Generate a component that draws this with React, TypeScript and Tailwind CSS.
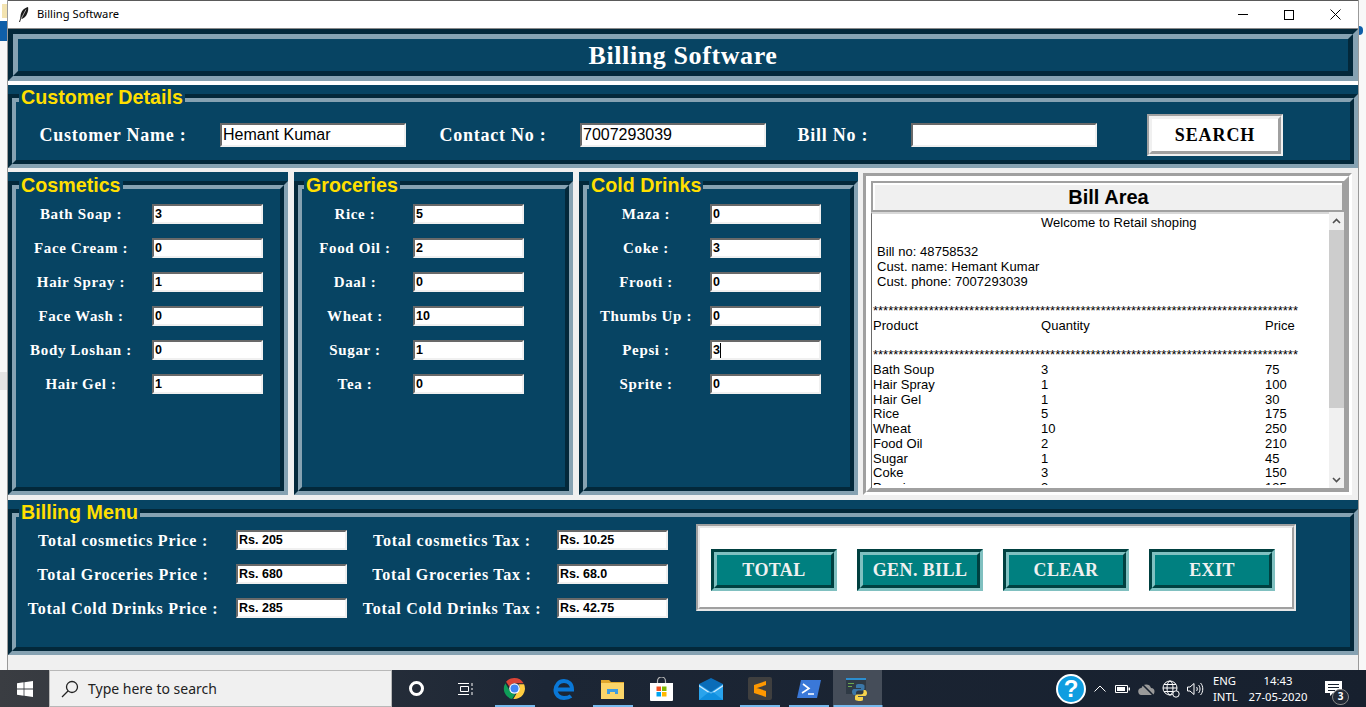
import React from "react";

const serif = "font-['Liberation_Serif',serif]";
const sans = "font-['Liberation_Sans',Arial,sans-serif]";

// tk "groove" border: two nested boxes so the corners get mitred like the original
const Groove = ({ className = "", children }: { className?: string; children?: React.ReactNode }) => (
  <div className={`border-[5px] border-t-[#03283a] border-l-[#03283a] border-r-[#86a2b2] border-b-[#86a2b2] ${className}`}>
    <div className="h-full border-[5px] border-t-[#86a2b2] border-l-[#86a2b2] border-r-[#03283a] border-b-[#03283a]">
      {children}
    </div>
  </div>
);

const LabelFrame = ({
  title,
  className = "",
  titleClass = "left-[11px] top-[1px]",
  children,
}: {
  title: string;
  className?: string;
  titleClass?: string;
  children?: React.ReactNode;
}) => (
  <div className={`relative bg-[#074463] pt-[9px] ${className}`}>
    <div className={`absolute z-10 bg-[#074463] px-[2px] text-[19.7px] leading-[23px] font-bold text-[#ffdf00] ${titleClass} ${sans}`}>
      {title}
    </div>
    <div className="h-full border-4 border-t-[#03283a] border-l-[#03283a] border-r-[#86a2b2] border-b-[#86a2b2]">
      <div className="h-full border-4 border-t-[#86a2b2] border-l-[#86a2b2] border-r-[#03283a] border-b-[#03283a] p-[2px]">
        {children}
      </div>
    </div>
  </div>
);

const Field = ({ value, caret = false }: { value: string; caret?: boolean }) => (
  <div
    className={`flex h-5 w-[111px] shrink-0 items-center border-2 border-t-[#696969] border-l-[#696969] border-r-[#f0f0f0] border-b-[#f0f0f0] bg-white pl-[1px] text-[12.5px] font-bold text-black ${sans}`}
  >
    {value}
    {caret && <span className="h-[15px] w-px bg-black" />}
  </div>
);

const ItemRow = ({
  label,
  value,
  labelWidth,
  gap,
  caret,
}: {
  label: string;
  value: string;
  labelWidth: string;
  gap: string;
  caret?: boolean;
}) => (
  <div className="flex h-5 items-center">
    <div className={`${labelWidth} ${gap} shrink-0 text-center text-[15px] font-bold tracking-[0.65px] whitespace-nowrap text-white ${serif}`}>
      {label}
    </div>
    <Field value={value} caret={caret} />
  </div>
);

const ItemFrame = ({
  title,
  rows,
  width,
  labelWidth,
  gap,
  titleClass,
}: {
  title: string;
  rows: [string, string][];
  width: string;
  labelWidth: string;
  gap: string;
  titleClass: string;
}) => (
  <LabelFrame title={title} className={`${width} shrink-0`} titleClass={titleClass}>
    <div className="flex flex-col gap-[14px] pt-[13px]">
      {rows.map(([l, v]) => (
        <ItemRow key={l} label={l} value={v} labelWidth={labelWidth} gap={gap} caret={l === "Pepsi :"} />
      ))}
    </div>
  </LabelFrame>
);

const BillLine = ({ a, b, c }: { a: string; b: string; c: string }) => (
  <div className="flex">
    <span className="w-[168px]">{a}</span>
    <span className="w-[224px]">{b}</span>
    <span>{c}</span>
  </div>
);

const items: [string, string, string][] = [
  ["Bath Soup", "3", "75"],
  ["Hair Spray", "1", "100"],
  ["Hair Gel", "1", "30"],
  ["Rice", "5", "175"],
  ["Wheat", "10", "250"],
  ["Food Oil", "2", "210"],
  ["Sugar", "1", "45"],
  ["Coke", "3", "150"],
  ["Pepsi", "3", "135"],
];

const stars = "*".repeat(84);

const BillArea = () => (
  <div className="mt-[1px] -ml-[1px] w-[489px] shrink-0 border-[3px] border-t-[#a0a0a0] border-l-[#a0a0a0] border-r-white border-b-white">
    <div className="flex h-full flex-col border-[5px] border-t-white border-l-white border-r-[#a0a0a0] border-b-[#a0a0a0] bg-[#f0f0f0]">
      <div className="h-[31px] shrink-0 border-2 border-[#a0a0a0]">
        <div className={`flex h-full items-center justify-center border-t-2 border-l-2 border-white pb-[2px] text-[20px] font-bold text-black ${sans}`}>
          Bill Area
        </div>
      </div>
      <div className="flex min-h-0 flex-1">
        <div className="h-[276px] w-[458px] shrink-0 border-t-2 border-l border-t-[#d8d8d8] border-l-[#696969] bg-white">
          <div className={`h-[271px] overflow-hidden pt-[2px] pl-[1px] text-[13px] leading-[14.72px] tracking-[0.05px] text-black ${sans}`}>
            <div className="pl-[168px] whitespace-nowrap">Welcome to Retail shoping</div>
            <div className="h-[14.72px]" />
            <div className="pl-[4px]">Bill no: 48758532</div>
            <div className="pl-[4px]">Cust. name: Hemant Kumar</div>
            <div className="pl-[4px]">Cust. phone: 7007293039</div>
            <div className="h-[14.72px]" />
            <div className="tracking-normal whitespace-nowrap">{stars}</div>
            <BillLine a="Product" b="Quantity" c="Price" />
            <div className="h-[14.72px]" />
            <div className="tracking-normal whitespace-nowrap">{stars}</div>
            {items.map(([a, b, c]) => (
              <BillLine key={a} a={a} b={b} c={c} />
            ))}
          </div>
        </div>
        <div className="flex h-[276px] flex-1 flex-col bg-[#f0f0f0]">
          <div className="flex h-[18px] items-center justify-center">
            <svg width="9" height="6" viewBox="0 0 9 6" fill="none" stroke="#505050" strokeWidth="1.6">
              <path d="M1 5l3.5-3.5L8 5" />
            </svg>
          </div>
          <div className="h-[178px] bg-[#cdcdcd]" />
          <div className="flex-1" />
          <div className="flex h-4 items-center justify-center">
            <svg width="9" height="6" viewBox="0 0 9 6" fill="none" stroke="#505050" strokeWidth="1.6">
              <path d="M1 1l3.5 3.5L8 1" />
            </svg>
          </div>
        </div>
      </div>
    </div>
  </div>
);

const TkButton = ({ label }: { label: string }) => (
  <div className="h-[42px] w-[126px] border-[3px] border-t-[#004040] border-l-[#004040] border-r-[#80c0c0] border-b-[#80c0c0]">
    <div className={`flex h-full items-center justify-center border-[3px] border-t-[#80c0c0] border-l-[#80c0c0] border-r-[#004040] border-b-[#004040] bg-[#008080] text-[18px] font-bold tracking-[0.4px] text-[#f0f0f0] ${serif}`}>
      {label}
    </div>
  </div>
);

const TotalRow = ({ label, value, w, gap }: { label: string; value: string; w: string; gap: string }) => (
  <div className="flex h-5 items-center">
    <div className={`${w} ${gap} shrink-0 pt-[2px] text-center text-[16px] font-bold tracking-[0.75px] whitespace-nowrap text-white ${serif}`}>
      {label}
    </div>
    <Field value={value} />
  </div>
);

const Underline = ({ w = "w-10" }: { w?: string }) => <div className={`absolute bottom-0 left-1/2 h-[2px] -translate-x-1/2 bg-[#76b9ed] ${w}`} />;

const TaskIcon = ({ children, on, active }: { children: React.ReactNode; on?: boolean; active?: boolean }) => (
  <div className={`relative flex h-full w-[49px] shrink-0 items-center justify-center ${active ? "bg-[#454d59]" : ""}`}>
    {children}
    {on && <Underline w={active ? "w-full" : "w-10"} />}
  </div>
);

const Taskbar = () => (
  <div className="flex h-[37px] shrink-0 items-center bg-gradient-to-r from-[#3a3d42] via-[#1c2635] via-40% to-[#17202e] text-white">
    <div className="flex h-full w-[49px] shrink-0 items-center justify-center">
      <svg width="16" height="16" viewBox="0 0 16 16" fill="#fff">
        <path d="M0 2.2l6.6-.9v6.3H0zM7.4 1.2L16 0v7.6H7.4zM0 8.4h6.6v6.3L0 13.8zM7.4 8.4H16V16l-8.6-1.2z" />
      </svg>
    </div>
    <div className="flex h-full w-[343px] shrink-0 items-center border border-[#b8b8b8] bg-[#f0f0f0] pl-[11px]">
      <svg width="18" height="18" viewBox="0 0 18 18" fill="none" stroke="#222" strokeWidth="1.3">
        <circle cx="11" cy="7" r="5.5" />
        <path d="M7 11l-6 6" />
      </svg>
      <span className="ml-[9px] font-['Noto_Sans',sans-serif] text-[14px] text-[#222]">Type here to search</span>
    </div>
    <div className="flex h-full w-[49px] shrink-0 items-center justify-center">
      <div className="h-[15px] w-[15px] rounded-full border-[3px] border-white" />
    </div>
    <div className="flex h-full w-[49px] shrink-0 items-center justify-center">
      <svg width="18" height="16" viewBox="0 0 18 16" fill="none" stroke="#fff" strokeWidth="1">
        <path d="M1 2.5h11M3.5 5.5h8v5h-8zM1 13.5h11M15 2v3M15 7v2M15 11v3" />
      </svg>
    </div>
    <TaskIcon on>
      <svg width="23" height="23" viewBox="0 0 24 24">
        <path fill="#db4437" d="M12 1a11 11 0 0 1 9.5 5.5H12a5.5 5.5 0 0 0-5.2 3.7L3.2 4.9A11 11 0 0 1 12 1z" />
        <path fill="#0f9d58" d="M2.5 6.5l5 8.6a5.5 5.5 0 0 0 5.6 2.3L9.5 23A11 11 0 0 1 2.5 6.5z" />
        <path fill="#ffcd40" d="M22 7.5a11 11 0 0 1-11.2 15.4l5-8.5a5.5 5.5 0 0 0 .3-6.9z" />
        <circle cx="12" cy="12" r="5.5" fill="#fff" />
        <circle cx="12" cy="12" r="4.2" fill="#4285f4" />
      </svg>
    </TaskIcon>
    <TaskIcon>
      <svg width="22" height="22" viewBox="0 0 22 22" fill="none" stroke="#0a78d7" strokeWidth="4">
        <path d="M4 11.5h15C19 6 15.5 3 11 3 6 3 3 7 2.5 12 2.5 17 6.5 20 11 20c3 0 5.5-.8 7-2" />
      </svg>
    </TaskIcon>
    <TaskIcon on>
      <svg width="23" height="20" viewBox="0 0 23 20">
        <path fill="#e0a82e" d="M0 1h8l2 2h13v3H0z" />
        <path fill="#fbd569" d="M0 4h23v16H0z" />
        <path fill="#3f9ce0" d="M6 15v-5h11v5h-3v-2H9v2z" />
      </svg>
    </TaskIcon>
    <TaskIcon>
      <svg width="23" height="24" viewBox="0 0 23 24">
        <path fill="none" stroke="#b8b8b8" strokeWidth="1.2" d="M7.5 7V4a4 4 0 0 1 8 0v3" />
        <path fill="#fff" d="M0 6h23v17a1 1 0 0 1-1 1H1a1 1 0 0 1-1-1z" />
        <path fill="#f25022" d="M6.5 9.5H11V14H6.5z" />
        <path fill="#7fba00" d="M12 9.5h4.5V14H12z" />
        <path fill="#00a4ef" d="M6.5 15H11v4.5H6.5z" />
        <path fill="#ffb900" d="M12 15h4.5v4.5H12z" />
      </svg>
    </TaskIcon>
    <TaskIcon>
      <svg width="24" height="22" viewBox="0 0 24 22">
        <path fill="#29a3ec" d="M0 6h24v16H0z" />
        <path fill="#0a6cb8" d="M0 6l12-6 12 6-12 8z" />
        <path fill="#cfeaff" d="M0 7l12 8 12-8v1.5L12 16.5 0 8.5z" />
        <path fill="#0f8fe0" d="M0 22l10-8 2 1.5 2-1.5 10 8z" />
      </svg>
    </TaskIcon>
    <TaskIcon on>
      <div className="flex h-[23px] w-[24px] items-center justify-center rounded-[2px] bg-[#3f3f3f]">
        <svg width="12" height="16" viewBox="0 0 12 16" fill="#ff9800">
          <path d="M12 0v4L0 8V4zM0 6l12 4v4L0 10zM0 10l12 2v4L0 12z" />
        </svg>
      </div>
    </TaskIcon>
    <TaskIcon on>
      <svg width="24" height="18" viewBox="0 0 24 18">
        <path fill="#3a78d8" d="M4 0h20l-4 18H0z" />
        <path fill="none" stroke="#fff" strokeWidth="1.6" d="M6 4l6 4.5-7 4.5M11 14h6" />
      </svg>
    </TaskIcon>
    <TaskIcon on active>
      <svg width="24" height="24" viewBox="0 0 24 24">
        <path fill="#2f3a45" d="M0 1h20v16H0z" />
        <path fill="#2c8ecf" d="M0 1h20v2H0z" />
        <path fill="#6aa84f" d="M2 6h6v1H2zM2 9h4v1H2z" />
        <path fill="#3b77a8" d="M13 7c-3 0-3 1-3 2v2h5v1H8c-1.5 0-2 1.5-2 3s1 3 2 3h2v-2c0-1.5 1-2.5 2.5-2.5h4c1 0 2-1 2-2V9c0-1-1-2-3-2z" />
        <path fill="#f7d44c" d="M14 24c3 0 3-1 3-2v-2h-5v-1h7c1.5 0 2-1.5 2-3s-1-3-2-3h-1.5v2c0 1.5-1 2.5-2.5 2.5h-4c-1 0-2 1-2 2V22c0 1 1 2 5 2z" />
      </svg>
    </TaskIcon>
    <div className="flex-1" />
    <div className="flex h-full items-center pr-[10px]">
      <div className="mr-[8px] flex h-[30px] w-[30px] items-center justify-center rounded-full border-2 border-white bg-[#0f9de0] font-['Liberation_Sans',sans-serif] text-[24px] leading-none font-bold text-white">
        ?
      </div>
      <svg className="mr-[9px]" width="12" height="7" viewBox="0 0 12 7" fill="none" stroke="#fff" strokeWidth="1">
        <path d="M.5 6.5L6 1l5.5 5.5" />
      </svg>
      <svg className="mr-[8px]" width="15" height="8" viewBox="0 0 15 8">
        <path fill="none" stroke="#fff" d="M.5.5h12v7H.5z" />
        <path fill="#fff" d="M2 2h8v4H2zM13.5 2.5H15v3h-1.5z" />
      </svg>
      <svg className="mr-[7px]" width="17" height="12" viewBox="0 0 17 12">
        <path fill="#9a9a9a" d="M4 12a3.5 3.5 0 0 1-.5-7A5 5 0 0 1 13 5a3.5 3.5 0 0 1 0 7z" />
        <path stroke="#17202e" strokeWidth="1.5" d="M3 0l12 12" />
      </svg>
      <svg className="mr-[7px]" width="18" height="18" viewBox="0 0 18 18" fill="none" stroke="#fff" strokeWidth="1">
        <circle cx="8" cy="8" r="7" />
        <ellipse cx="8" cy="8" rx="3" ry="7" />
        <path d="M1 8h14M2 4.5h12M2 11.5h12" />
        <circle cx="14" cy="14" r="3.2" fill="#17202e" />
      </svg>
      <svg className="mr-[9px]" width="17" height="14" viewBox="0 0 17 14" fill="none" stroke="#fff" strokeWidth="1">
        <path d="M.5 5v4H3L7 12.5v-11L3 5zM9.5 5c1 1 1 3 0 4M11.5 3c2 2 2 6 0 8M13.5 1c3 3 3 9 0 12" />
      </svg>
      <div className="w-[33px] font-['Noto_Sans',sans-serif] text-[11.3px] leading-[16px] text-white">
        <div>ENG</div>
        <div>INTL</div>
      </div>
      <div className="w-[64px] text-center font-['Noto_Sans',sans-serif] text-[11.3px] leading-[16px] text-white">
        <div>14:43</div>
        <div className="whitespace-nowrap">27-05-2020</div>
      </div>
      <div className="relative flex w-[46px] items-center justify-center">
        <svg width="17" height="16" viewBox="0 0 17 16" fill="#fff">
          <path d="M0 0h17v12H8l-3 3v-3H0z" />
          <path stroke="#17202e" d="M3 3.5h11M3 6.5h11M3 9.5h7" />
        </svg>
        <div className="absolute top-[8px] left-[22px] flex h-[16px] w-[17px] items-center justify-center rounded-full border border-[#888] bg-[#222a36] font-['Noto_Sans',sans-serif] text-[10px] font-bold text-white">
          3
        </div>
      </div>
    </div>
  </div>
);

const TitleBar = () => (
  <div className="flex h-[29px] shrink-0 items-center border-t border-b border-t-[#5a5a5a] border-b-[#8a8a8a] bg-white">
    <svg className="ml-[11px]" width="10" height="15" viewBox="0 0 10 15">
      <path fill="#1a1a1a" d="M9 0C5 1 2 4 1.5 9L1 12 0 15h1l1-3c4-.5 6-4 7-8 .3-1.5.3-3 0-4z" />
      <path stroke="#fff" strokeWidth=".6" d="M7 2.5L2 12" />
    </svg>
    <span className="ml-[8px] font-['Noto_Sans',sans-serif] text-[11.2px] text-black">Billing Software</span>
    <div className="flex-1" />
    <div className="flex h-full w-[46px] items-center justify-center">
      <div className="h-px w-[10px] bg-black" />
    </div>
    <div className="flex h-full w-[46px] items-center justify-center">
      <div className="h-[10px] w-[10px] border border-black" />
    </div>
    <div className="flex h-full w-[46px] items-center justify-center">
      <svg width="11" height="11" viewBox="0 0 11 11" stroke="#000" strokeWidth="1">
        <path d="M.5.5l10 10M10.5.5l-10 10" />
      </svg>
    </div>
  </div>
);

const sunken = "border-2 border-t-[#696969] border-l-[#696969] border-r-[#f0f0f0] border-b-[#f0f0f0] bg-white";
const custLabel = `shrink-0 text-center text-[18px] font-bold tracking-[0.75px] text-white ${serif}`;

export default function App() {
  return (
    <div className="flex h-[707px] w-[1366px] flex-col overflow-hidden bg-white">
      <div className="flex min-h-0 flex-1">
        {/* desktop showing behind the window */}
        <div className="flex w-[8px] shrink-0 flex-col border-r border-[#9a9a9a]">
          <div className="h-[21px] bg-white pl-[2px]">
            <div className="mt-1 h-[14px] w-full bg-[#f3e3b0]" />
          </div>
          <div className="h-[20px] bg-[#0f5fa8]" />
          <div className="h-[331px] bg-[#f8f8f8]" />
          <div className="h-[18px] bg-[#e4e4e4]" />
          <div className="flex-1 bg-[#f8f8f8]" />
        </div>

        <div className="flex w-[1350px] shrink-0 flex-col bg-[#f0f0f0]">
          <TitleBar />
          <Groove className="h-[52px] shrink-0 bg-[#074463]">
            <div className={`flex h-full items-center justify-center pt-[1px] text-[26px] font-bold tracking-[0.6px] text-white ${serif}`}>
              Billing Software
            </div>
          </Groove>
          <div className="h-[4px] shrink-0 bg-white" />
          <LabelFrame title="Customer Details" className="h-[83px] shrink-0">
            <div className="flex h-full items-center pt-[8px]">
              <div className={`w-[190px] ${custLabel}`}>Customer Name :</div>
              <div className={`ml-[12px] flex h-6 w-[186px] shrink-0 items-center pl-[1px] text-[16px] text-black ${sunken} ${sans}`}>Hemant Kumar</div>
              <div className={`w-[174px] ${custLabel}`}>Contact No :</div>
              <div className={`flex h-6 w-[186px] shrink-0 items-center pl-[1px] text-[16px] text-black ${sunken} ${sans}`}>7007293039</div>
              <div className={`w-[134px] ${custLabel}`}>Bill No :</div>
              <div className={`ml-[11px] h-6 w-[186px] shrink-0 ${sunken}`} />
              <div className="ml-[50px] h-[42px] w-[136px] shrink-0 border-[2px] border-t-[#a0a0a0] border-l-[#a0a0a0] border-r-[#f0f0f0] border-b-[#f0f0f0]">
                <div className={`flex h-full items-center justify-center border-[3px] border-t-[#f0f0f0] border-l-[#f0f0f0] border-r-[#a0a0a0] border-b-[#a0a0a0] bg-white text-[18px] font-bold tracking-[0.9px] text-black ${serif}`}>
                  SEARCH
                </div>
              </div>
            </div>
          </LabelFrame>
          <div className="h-[4px] shrink-0" />
          <div className="flex h-[323px] shrink-0 gap-[6px]">
            <ItemFrame
              title="Cosmetics"
              width="w-[280px]"
              labelWidth="w-[126px]"
              gap="mr-[8px]"
              titleClass="left-[11px] top-[2px]"
              rows={[["Bath Soap :", "3"], ["Face Cream :", "0"], ["Hair Spray :", "1"], ["Face Wash :", "0"], ["Body Loshan :", "0"], ["Hair Gel :", "1"]]}
            />
            <ItemFrame
              title="Groceries"
              width="w-[279px]"
              labelWidth="w-[102px]"
              gap="mr-[7px]"
              titleClass="left-[10px] top-[2px]"
              rows={[["Rice :", "5"], ["Food Oil :", "2"], ["Daal :", "0"], ["Wheat :", "10"], ["Sugar :", "1"], ["Tea :", "0"]]}
            />
            <ItemFrame
              title="Cold Drinks"
              width="w-[279px]"
              labelWidth="w-[114px]"
              gap="mr-[7px]"
              titleClass="left-[10px] top-[2px]"
              rows={[["Maza :", "0"], ["Coke :", "3"], ["Frooti :", "0"], ["Thumbs Up :", "0"], ["Pepsi :", "3"], ["Sprite :", "0"]]}
            />
            <BillArea />
          </div>
          <div className="h-[5px] shrink-0" />
          <LabelFrame title="Billing Menu" className="h-[155px] shrink-0">
            <div className="flex pt-[11px]">
              <div className="flex flex-col gap-[14px]">
                <TotalRow label="Total cosmetics Price :" value="Rs. 205" w="w-[210px]" gap="mr-[8px]" />
                <TotalRow label="Total Groceries Price :" value="Rs. 680" w="w-[210px]" gap="mr-[8px]" />
                <TotalRow label="Total Cold Drinks Price :" value="Rs. 285" w="w-[210px]" gap="mr-[8px]" />
              </div>
              <div className="flex flex-col gap-[14px]">
                <TotalRow label="Total cosmetics Tax :" value="Rs. 10.25" w="w-[210px]" gap="mr-0" />
                <TotalRow label="Total Groceries Tax :" value="Rs. 68.0" w="w-[210px]" gap="mr-0" />
                <TotalRow label="Total Cold Drinks Tax :" value="Rs. 42.75" w="w-[210px]" gap="mr-0" />
              </div>
              <div className="-mt-[6px] ml-[28px] h-[87px] w-[600px] shrink-0 border-2 border-t-[#a0a0a0] border-l-[#a0a0a0] border-r-[#e8e8e8] border-b-[#e8e8e8]">
                <div className="flex h-full items-center gap-5 border-2 border-t-[#e8e8e8] border-l-[#e8e8e8] border-r-[#a0a0a0] border-b-[#a0a0a0] bg-white pt-[5px] pl-[11px]">
                  <TkButton label="TOTAL" />
                  <TkButton label="GEN. BILL" />
                  <TkButton label="CLEAR" />
                  <TkButton label="EXIT" />
                </div>
              </div>
            </div>
          </LabelFrame>
          <div className="flex-1" />
        </div>

        <div className="relative flex-1 border-l border-[#9a9a9a] bg-[#f8f8f8]">
          <div className="absolute top-[26px] left-0 h-[9px] w-[4px] rounded-r-full bg-[#0f5fa8]" />
        </div>
      </div>
      <Taskbar />
    </div>
  );
}
